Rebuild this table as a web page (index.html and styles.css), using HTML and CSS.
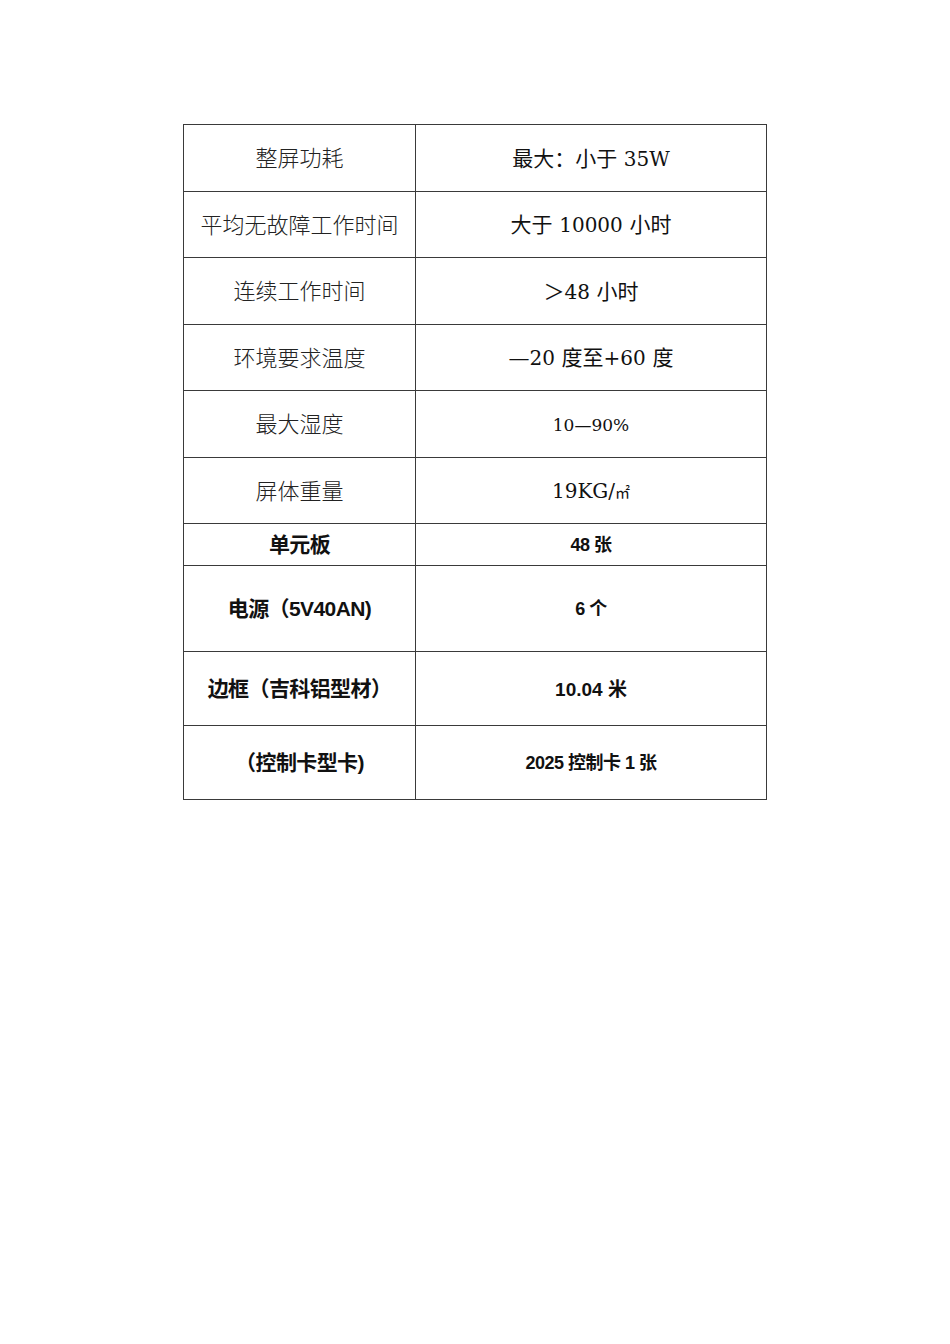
FILE: index.html
```html
<!DOCTYPE html>
<html lang="zh-CN">
<head>
<meta charset="utf-8">
<title>参数表</title>
<link rel="stylesheet" href="styles.css">
</head>
<body>
<table class="spec">
  <colgroup><col class="c1"><col class="c2"></colgroup>
  <tbody>
    <tr class="r-a"><td class="k">整屏功耗</td><td class="v">最大：小于 <span class="n">35W</span></td></tr>
    <tr class="r-b"><td class="k">平均无故障工作时间</td><td class="v">大于 <span class="n">10000</span> 小时</td></tr>
    <tr class="r-a"><td class="k">连续工作时间</td><td class="v">＞<span class="n">48</span> 小时</td></tr>
    <tr class="r-b"><td class="k">环境要求温度</td><td class="v">—<span class="n">20</span> 度至<span class="n">+60</span> 度</td></tr>
    <tr class="r-a"><td class="k">最大湿度</td><td class="v small"><span class="n">10</span>—<span class="n">90</span>%</td></tr>
    <tr class="r-b"><td class="k">屏体重量</td><td class="v"><span class="n">19KG/</span><span class="unit">㎡</span></td></tr>
    <tr class="r-s"><td class="kb">单元板</td><td class="vb">48 张</td></tr>
    <tr class="r-l"><td class="kb">电源（5V40AN)</td><td class="vb">6 个</td></tr>
    <tr class="r-m"><td class="kb">边框（吉科铝型材）</td><td class="vb wide">10.04 米</td></tr>
    <tr class="r-m"><td class="kb">（控制卡型卡)</td><td class="vb">2025 控制卡 1 张</td></tr>
  </tbody>
</table>
</body>
</html>
```

FILE: styles.css
```css
html, body {
  margin: 0;
  padding: 0;
  background: #ffffff;
}

body {
  padding-top: 124px;
  color: #111;
}

.spec {
  border-collapse: collapse;
  table-layout: fixed;
  width: 583px;
  margin: 0 0 0 183px;
}

.c1 { width: 232px; }
.c2 { width: 351px; }

.spec td {
  border: 1px solid #3a3a3a;
  text-align: center;
  vertical-align: middle;
  padding: 0 0 3px 0;
  line-height: 1.2;
  white-space: nowrap;
}

.r-a td { height: 63px; }
.r-b td { height: 62px; }
.r-s td { height: 38px; }
.r-l td { height: 82px; }
.r-m td { height: 70px; }

.k {
  font-family: "Noto Sans CJK SC", sans-serif;
  font-weight: 300;
  font-size: 22px;
  color: #222;
}

.spec td.v,
.spec td.vb {
  padding: 3px 0 0 0;
}

.spec td.kb {
  padding: 2px 0 1px 0;
}

.v {
  font-family: "DejaVu Serif", "Noto Sans CJK SC", serif;
  font-size: 21px;
  font-weight: 400;
  color: #111;
}

.v .n {
  font-family: "DejaVu Serif", serif;
  font-size: 20px;
}

.v.small,
.v.small .n {
  font-size: 17px;
}

.v .unit {
  font-family: "Noto Sans CJK SC", sans-serif;
  font-size: 15px;
}

.kb {
  font-family: "Liberation Sans", "Noto Sans CJK SC", sans-serif;
  font-weight: 700;
  font-size: 21px;
  letter-spacing: -0.6px;
  color: #111;
}

.vb {
  font-family: "Liberation Sans", "Noto Sans CJK SC", sans-serif;
  font-weight: 700;
  font-size: 18px;
  letter-spacing: -0.5px;
  color: #111;
}

.vb.wide {
  font-size: 19px;
  letter-spacing: 0;
}
```
